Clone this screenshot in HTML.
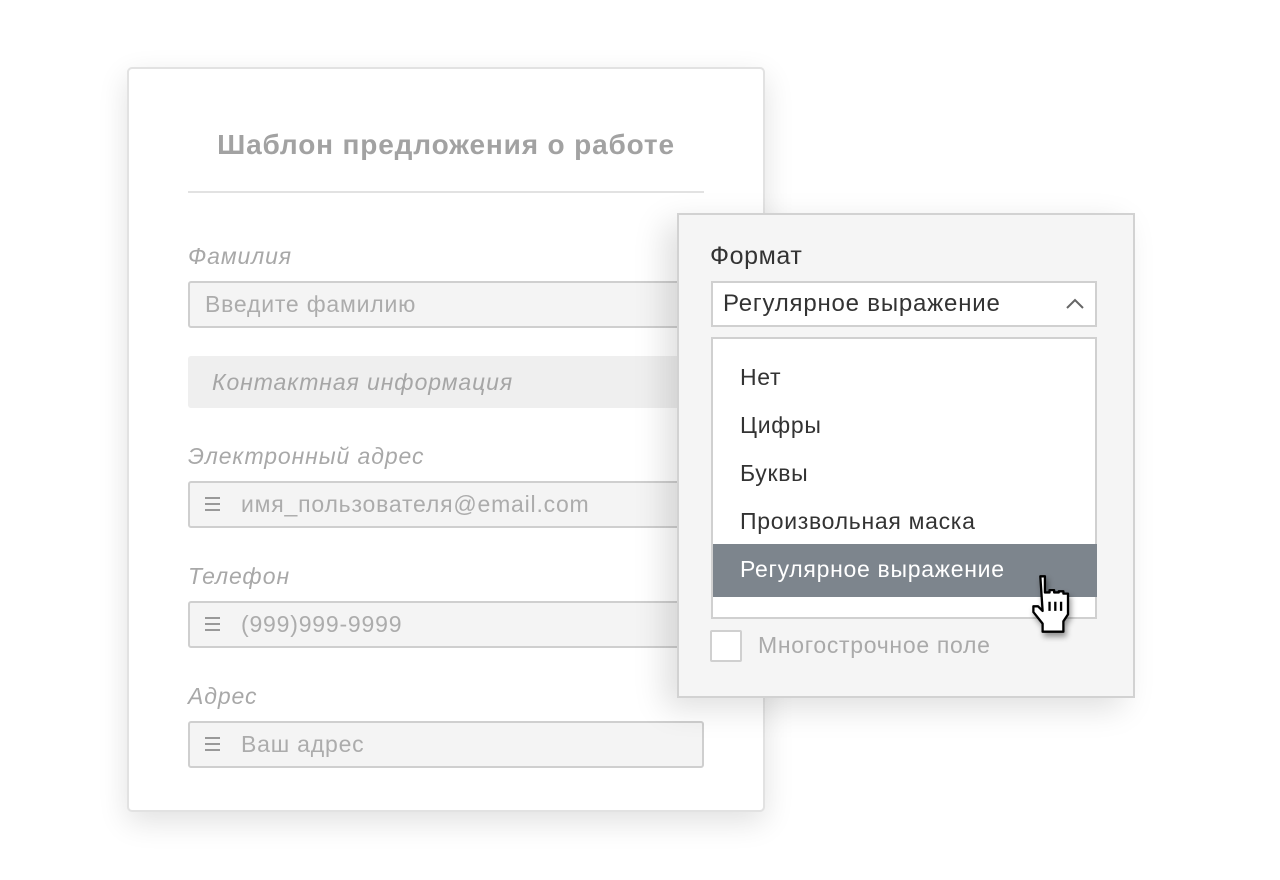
<!DOCTYPE html>
<html><head><meta charset="utf-8"><style>
*{box-sizing:border-box;margin:0;padding:0}
body{width:1280px;height:880px;background:#fff;position:relative;font-family:"Liberation Sans","DejaVu Sans",sans-serif;overflow:hidden}
.abs{position:absolute}
.card{left:127px;top:67px;width:638px;height:745px;background:#fff;border:2px solid #e2e2e2;border-radius:5px;box-shadow:0 10px 30px rgba(0,0,0,.12)}
.title{left:127px;width:638px;top:129px;text-align:center;font-weight:bold;font-size:28px;letter-spacing:.85px;color:#a2a2a2}
.div{left:188px;top:191px;width:516px;height:2px;background:#e2e2e2}
.lbl{left:188px;font-style:italic;font-size:23px;letter-spacing:.9px;color:#a8a8a8}
.inp{left:188px;width:516px;height:47px;background:#f4f4f4;border:2px solid #cfcfcf;border-radius:3px;font-size:23px;letter-spacing:.8px;color:#acacac;line-height:43px;padding-left:15px}
.inp .ic{position:absolute;left:15px;top:14px;width:15px}
.inp .ic i{display:block;height:2px;background:#999;margin-bottom:4px}
.band{left:188px;top:356px;width:516px;height:52px;background:#efefef;border-radius:3px;font-style:italic;font-size:23px;letter-spacing:.9px;color:#a6a6a6;line-height:52px;padding-left:24px}
.panel{left:677px;top:213px;width:458px;height:485px;background:#f5f5f5;border:2px solid #d2d2d2;box-shadow:-12px 10px 30px rgba(0,0,0,.13)}
.sel{left:711px;top:281px;width:386px;height:46px;background:#fff;border:2px solid #d0d0d0;font-size:24px;letter-spacing:.8px;color:#333;line-height:42px;padding-left:10px}
.dd{left:711px;top:337px;width:386px;height:282px;background:#fff;border:2px solid #d0d0d0}
.it{left:740px;font-size:23px;letter-spacing:.7px;color:#333}
</style></head><body>
<div class="abs card"></div>
<div class="abs title">Шаблон предложения о работе</div>
<div class="abs div"></div>
<div class="abs lbl" style="top:243px">Фамилия</div>
<div class="abs inp" style="top:281px">Введите фамилию</div>
<div class="abs band">Контактная информация</div>
<div class="abs lbl" style="top:443px">Электронный адрес</div>
<div class="abs inp" style="top:481px;padding-left:51px"><span class="ic"><i></i><i></i><i></i></span>имя_пользователя@email.com</div>
<div class="abs lbl" style="top:563px">Телефон</div>
<div class="abs inp" style="top:601px;padding-left:51px"><span class="ic"><i></i><i></i><i></i></span>(999)999-9999</div>
<div class="abs lbl" style="top:683px">Адрес</div>
<div class="abs inp" style="top:721px;padding-left:51px"><span class="ic"><i></i><i></i><i></i></span>Ваш адрес</div>

<div class="abs panel"></div>
<div class="abs" style="left:710px;top:242px;font-size:25px;letter-spacing:.6px;color:#333">Формат</div>
<div class="abs sel">Регулярное выражение
<svg class="abs" style="left:352px;top:15px" width="20" height="12" viewBox="0 0 20 12"><path d="M2 10 L10 2 L18 10" fill="none" stroke="#666" stroke-width="2"/></svg></div>
<div class="abs dd"></div>
<div class="abs it" style="top:364px">Нет</div>
<div class="abs it" style="top:412px">Цифры</div>
<div class="abs it" style="top:460px">Буквы</div>
<div class="abs it" style="top:508px">Произвольная маска</div>
<div class="abs" style="left:713px;top:544px;width:384px;height:53px;background:#7d858d"></div>
<div class="abs it" style="top:556px;color:#fff">Регулярное выражение</div>
<svg class="abs" style="left:1026px;top:574px;filter:drop-shadow(2px 4px 3px rgba(0,0,0,.4))" width="54" height="60" viewBox="0 0 46 52">
<path d="M12 2 h4 v14 h4 v-2 h4 v2 h4 v-1 h4 v2 h4 v18 l-4 6 v9 h-18 v-7 l-8 -10 v-5 h4 l4 4 z" fill="#fff" stroke="#000" stroke-width="2" stroke-linejoin="round"/>
<path d="M20 24 v8 M25 24 v8 M30 24 v8" stroke="#000" stroke-width="2"/></svg>
<div class="abs" style="left:710px;top:630px;width:32px;height:32px;background:#fff;border:2px solid #d0d0d0;border-radius:2px"></div>
<div class="abs" style="left:758px;top:632px;font-size:23px;letter-spacing:.7px;color:#aaa">Многострочное поле</div>
</body></html>
